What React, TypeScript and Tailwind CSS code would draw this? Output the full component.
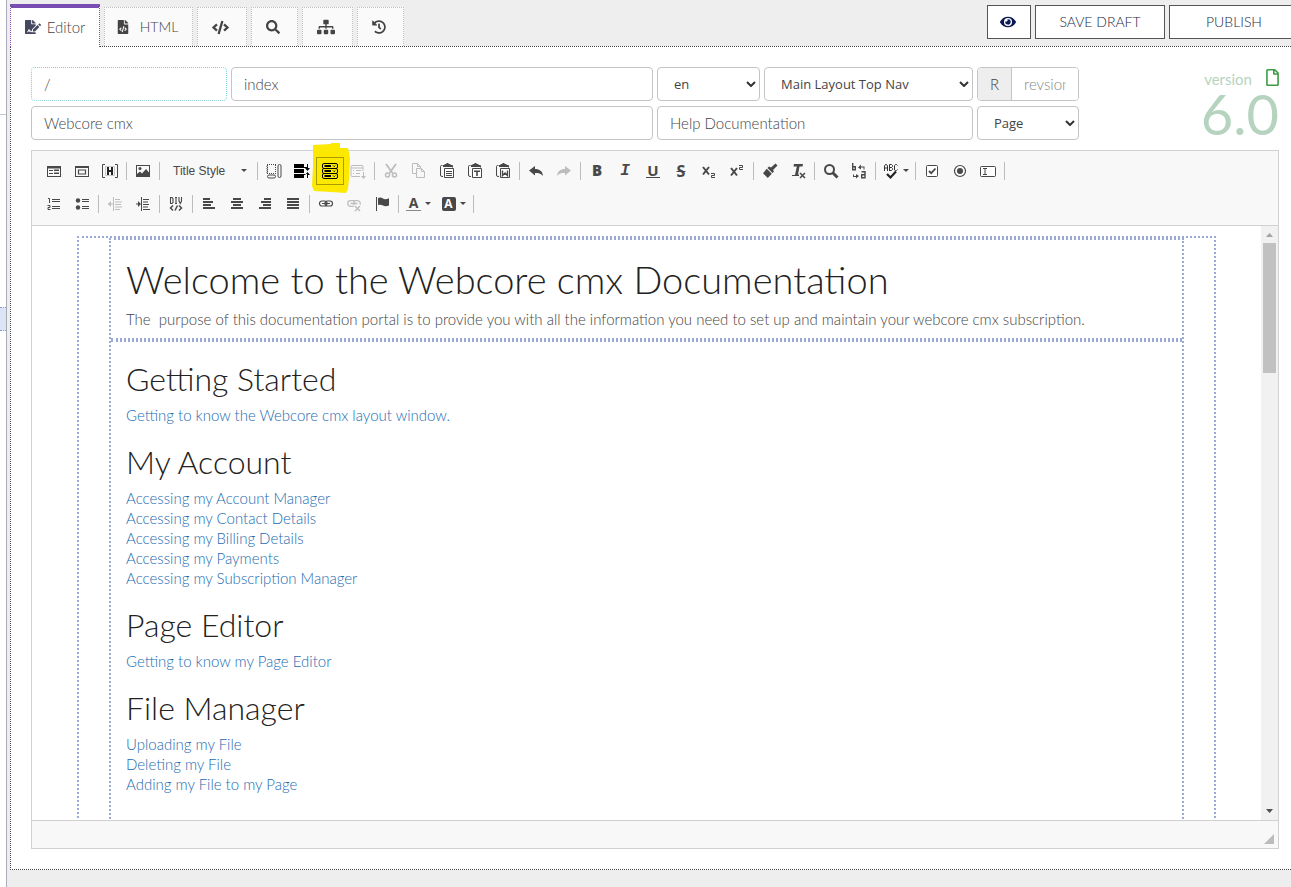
import React from "react";
import {
  FaCode,
  FaEye,
  FaFileCode,
  FaFileSignature,
  FaHistory,
  FaRegFile,
  FaSearch,
  FaSitemap,
} from "react-icons/fa";

const fieldBase =
  "h-[34px] w-full min-w-0 rounded border bg-white px-3 text-[15px] font-light text-[#444] outline-none placeholder:text-[#999]";
const field = `${fieldBase} border-[#c4c4c4]`;

const tabBase =
  "flex h-[39px] items-center justify-center border-x border-t border-dotted border-[#c0c0c0] bg-[#fafafa] pr-[3px] text-sm font-light text-[#444]";

function Separator() {
  return <span className="mx-[2px] h-[18px] w-px shrink-0 bg-[#bcbcbc]" />;
}

function Tool({
  label,
  children,
  dim,
  menu,
}: {
  label: string;
  children: React.ReactNode;
  dim?: boolean;
  menu?: boolean;
}) {
  return (
    <button
      type="button"
      aria-label={label}
      title={label}
      className={`flex h-7 shrink-0 items-center justify-center gap-1 leading-none ${menu ? "w-[35px]" : "w-7"} ${dim ? "text-[#bdbdbd]" : "text-[#484848]"}`}
    >
      {children}
      {menu && <Caret />}
    </button>
  );
}

function Caret() {
  return (
    <svg width="6" height="3" viewBox="0 0 6 3" fill="#484848" className="shrink-0">
      <path d="M0 0h6L3 3z" />
    </svg>
  );
}

function Ico({ children, w = 16 }: { children: React.ReactNode; w?: number }) {
  return (
    <svg
      width={w}
      height="16"
      viewBox={`0 0 ${w} 16`}
      fill="currentColor"
      stroke="none"
      className="shrink-0 overflow-visible"
    >
      {children}
    </svg>
  );
}

function Clipboard({ children }: { children: React.ReactNode }) {
  return (
    <Ico>
      <path d="M4 2h1.500V1h2V0h2v1h2v1H13v2H4z" />
      <path d="M3.500 2.500h-1a1 1 0 0 0-1 1V12a1.500 1.500 0 0 0 1.500 1.500h1M13 2.500h.5v2" fill="none" stroke="currentColor" />
      <path d="M5.500 5.500h9v9h-9z" fill="#fff" stroke="currentColor" />
      {children}
    </Ico>
  );
}

function Lines({ rows }: { rows: [number, number][] }) {
  return (
    <Ico>
      {rows.map(([x, width], i) => (
        <rect key={i} x={x} y={2 + i * 3} width={width} height="2" />
      ))}
    </Ico>
  );
}

function ServerStack() {
  return (
    <Ico>
      {[0, 5, 10].map((y) => (
        <g key={y}>
          <rect x=".5" y={y + 0.5} width="15" height="5" rx="1.500" fill="none" stroke="#000" />
          <path d={`M2.500 ${y + 3}h6.500`} stroke="#000" strokeWidth="2" />
          <path d={`M11 ${y + 2.500}l1.200 1.200 1.200-1.200`} stroke="#000" fill="none" strokeWidth=".9" />
        </g>
      ))}
    </Ico>
  );
}

function Toolbar() {
  return (
    <div role="toolbar" aria-label="Formatting" className="border-b border-[#d1d1d1] bg-[#f8f8f8] px-2 pt-[3px] pb-[5px]">
      <div className="flex h-[33px] items-center">
        <Tool label="Form">
          <Ico>
            <path d="M1 3h14v11H1zM2 5.500v7.500h12v-7.500z" fillRule="evenodd" />
            <path d="M3 7h4v1H3zM3 10h4v1H3zM8 6.500h5V8H8zM8 9.500h5V11H8z" />
          </Ico>
        </Tool>
        <Tool label="Frame">
          <Ico>
            <path d="M1 3h14v11H1zM2 5v8h12V5z" fillRule="evenodd" />
            <path d="M4.500 7h7v4h-7z" fill="none" stroke="currentColor" strokeWidth="1.200" />
          </Ico>
        </Tool>
        <Tool label="Hidden field">
          <Ico>
            <path d="M3 1.500H.5v13H3M13 1.500h2.500v13H13" fill="none" stroke="currentColor" />
            <path d="M3.500 3.500h9v9h-9z" fill="none" stroke="#c8c8c8" />
            <path d="M5 4h2v3h2V4h2v8H9V9H7v3H5z" fill="#222" />
          </Ico>
        </Tool>
        <Separator />
        <Tool label="Image">
          <Ico>
            <path d="M1 2h14v12H1zM2 3v10h12V3z" fillRule="evenodd" />
            <circle cx="5" cy="5.500" r="1.500" />
            <path d="M2 13V11l3-2.500 2 2L11 6l3 3.500V13z" />
          </Ico>
        </Tool>
        <Separator />
        <button
          type="button"
          className="flex h-7 w-[93px] shrink-0 items-center justify-between pr-2 pl-[11px] font-['Liberation_Sans',sans-serif] text-xs text-[#484848]"
        >
          Title Style
          <Caret />
        </button>
        <Separator />
        <Tool label="Layout">
          <Ico>
            <path d="M1 1.500h9M1 3v8M1.500 2v9M9.500 2v9M1 10.500h9" fill="none" stroke="currentColor" strokeDasharray="1 1" />
            <rect x="1.500" y="12" width="8" height="3" rx="1.500" fill="none" stroke="currentColor" />
            <rect x="12" y="1.500" width="3" height="13" rx="1.500" fill="none" stroke="currentColor" />
          </Ico>
        </Tool>
        <Tool label="Insert row">
          <Ico>
            <path d="M0 1h10v4H0zM0 6h10v4H0zM0 11h10v4H0z" fill="#000" />
            <path d="M9 4h4v1H9zM9 11h4v1H9zM13 1h1v4h2l-2.500 3L11 5h2zM13 15h1v-3h2l-2.500-3L11 12h2z" fill="#000" />
          </Ico>
        </Tool>
        <div className="relative shrink-0">
          <svg
            width="38"
            height="50"
            viewBox="0 0 38 50"
            className="absolute -top-[14px] -left-1"
            fill="#fde800"
            aria-hidden="true"
          >
            <path d="M1 2l18-1 0-1h9v5h8l2 10-1 21-1 10-2 4-15-1-17-1-2-5 1-20z" />
          </svg>
          <button
            type="button"
            aria-label="Accordion"
            aria-pressed="true"
            className="relative flex h-7 w-7 items-center justify-center border border-[#a99b00]"
          >
            <ServerStack />
          </button>
        </div>
        <Tool label="Add item" dim>
          <Ico>
            <path d="M10 13.500H2a1 1 0 0 1-1-1v-9a1 1 0 0 1 1-1h10a1 1 0 0 1 1 1V8M1 5h12M3 7.500h1M6 7.500h5M3 10.500h1M6 10.500h4" fill="none" stroke="currentColor" />
            <path d="M13 9h1v4h2l-2.500 3-2.500-3h2z" />
          </Ico>
        </Tool>
        <Separator />
        <Tool label="Cut" dim>
          <Ico>
            <path d="M3 1l6.500 9M13 1L6.500 10" stroke="currentColor" strokeWidth="1.800" />
            <circle cx="4.500" cy="12" r="2" fill="none" stroke="currentColor" strokeWidth="1.500" />
            <circle cx="11.500" cy="12" r="2" fill="none" stroke="currentColor" strokeWidth="1.500" />
          </Ico>
        </Tool>
        <Tool label="Copy" dim>
          <Ico>
            <path d="M5 10.500H1.500v-10h5l3 3V5M6.500.500v3h3" fill="none" stroke="currentColor" />
            <path d="M5.500 5.500h5l3 3v6h-8zM10.500 5.500v3h3" fill="#f8f8f8" stroke="currentColor" />
          </Ico>
        </Tool>
        <Tool label="Paste">
          <Clipboard>
            <path d="M7 8h6v1H7zM7 10h6v1H7zM7 12h6v1H7z" />
          </Clipboard>
        </Tool>
        <Tool label="Paste as plain text">
          <Clipboard>
            <path d="M7 7.500h6V9h-2.200v4H9.200V9H7z" />
          </Clipboard>
        </Tool>
        <Tool label="Paste from Word">
          <Clipboard>
            <path d="M7.500 7.500v5L10 10l2.500 2.500v-5" fill="none" stroke="currentColor" strokeWidth="1.400" />
          </Clipboard>
        </Tool>
        <Separator />
        <Tool label="Undo">
          <Ico>
            <path d="M1 7.500L7 3v3c4.500 0 7.500 2 8 7-2-2.500-4.500-3-8-3v2.500z" />
          </Ico>
        </Tool>
        <Tool label="Redo" dim>
          <Ico>
            <path d="M15 7.500L9 3v3c-4.500 0-7.500 2-8 7 2-2.500 4.500-3 8-3v2.500z" />
          </Ico>
        </Tool>
        <Separator />
        <Tool label="Bold">
          <span className="font-['Open_Sans',sans-serif] text-[15px] font-extrabold">B</span>
        </Tool>
        <Tool label="Italic">
          <span className="font-['Liberation_Mono',monospace] text-base font-bold italic">I</span>
        </Tool>
        <Tool label="Underline">
          <span className="border-b border-current px-px font-['Open_Sans',sans-serif] text-[15px] leading-[13px] font-bold">
            U
          </span>
        </Tool>
        <Tool label="Strikethrough">
          <span className="font-['Open_Sans',sans-serif] text-base font-bold line-through">S</span>
        </Tool>
        <Tool label="Subscript">
          <Ico>
            <path d="M2 4l6 7.500M8 4l-6 7.500" stroke="currentColor" strokeWidth="2" />
            <path d="M10 10.500h3.500v2h-3v2H14" fill="none" stroke="currentColor" />
          </Ico>
        </Tool>
        <Tool label="Superscript">
          <Ico>
            <path d="M2 5l6 7.500M8 5l-6 7.500" stroke="currentColor" strokeWidth="2" />
            <path d="M10 2.500h3.500v2h-3v2H14" fill="none" stroke="currentColor" />
          </Ico>
        </Tool>
        <Separator />
        <Tool label="Copy formatting">
          <Ico>
            <path d="M13.500.5l2 2-4.500 4.500 1 1.500-1.500 1.500-5-5L7 3.500l2 1zM4.800 5.700l5 5-4 4.300L1 10.200z" />
          </Ico>
        </Tool>
        <Tool label="Remove format">
          <Ico>
            <path d="M4 1h9l-.5 2.500h-3L8 11.500h1V13H2v-1h3l1.800-8.500H3.500z" />
            <path d="M10 10l5 5M15 10l-5 5" stroke="currentColor" strokeWidth="1.500" />
          </Ico>
        </Tool>
        <Separator />
        <Tool label="Find">
          <Ico>
            <circle cx="6.500" cy="6.500" r="4.500" fill="none" stroke="currentColor" strokeWidth="2" />
            <path d="M9.500 9.500l5 5" stroke="currentColor" strokeWidth="3" />
          </Ico>
        </Tool>
        <Tool label="Replace">
          <Ico>
            <path d="M1.700 0v7M1 3.700h3.300v3H1" fill="none" stroke="currentColor" strokeWidth="1.400" />
            <path d="M7 4.500l3-3v2h3.500v3h-1v-2H10v2zM8 13l-3 2.500V14H2v-2.500h1V13h2v-2z" />
            <path d="M10.500 8.700h3.500v6h-3.300v-3h3" fill="none" stroke="currentColor" strokeWidth="1.400" />
          </Ico>
        </Tool>
        <Separator />
        <Tool label="Spell check" menu>
          <Ico>
            <path d="M1.500 8V3l1-1.500h1l1 1.500v5M1.500 5h3M6.500 8V1.500h2l1 1v1l-1 1h-2 2l1 1v1l-1 1h-2M14.500 2.500l-1-1h-1l-1 1V7l1 .5h1l1-1" fill="none" stroke="#333" />
            <path d="M4 11l3.500 3.500L13 8.500" fill="none" stroke="#222" strokeWidth="2.200" />
          </Ico>
        </Tool>
        <Separator />
        <Tool label="Checkbox">
          <Ico>
            <rect x="2.500" y="2.500" width="11" height="11" rx="1" fill="#fff" stroke="currentColor" />
            <path d="M5 8l2.200 2.200L11.500 5.500" fill="none" stroke="currentColor" strokeWidth="1.800" />
          </Ico>
        </Tool>
        <Tool label="Radio button">
          <Ico>
            <circle cx="8" cy="8" r="5.500" fill="none" stroke="currentColor" strokeWidth="1.200" />
            <circle cx="8" cy="8" r="3" />
          </Ico>
        </Tool>
        <Tool label="Text field">
          <Ico>
            <rect x=".5" y="3.500" width="15" height="10" rx="1" fill="#fff" stroke="currentColor" />
            <path d="M3 5.500h4M5 5.500v6M3 11.500h4" stroke="currentColor" />
          </Ico>
        </Tool>
        <Separator />
      </div>

      <div className="flex h-[33px] items-center">
        <Tool label="Numbered list">
          <Ico>
            <path d="M2 2.500h1.500V7M1.500 9.500h2.500v2H2v2h2.500M6 3.500h8M6 5.500h8M6 10.500h8M6 12.500h8" fill="none" stroke="currentColor" />
          </Ico>
        </Tool>
        <Tool label="Bulleted list">
          <Ico>
            <circle cx="4" cy="4.500" r="2.200" />
            <circle cx="4" cy="11.500" r="2.200" />
            <path d="M8 3.500h7M8 5.500h7M8 10.500h7M8 12.500h7" stroke="currentColor" />
          </Ico>
        </Tool>
        <Separator />
        <Tool label="Decrease indent" dim>
          <Ico>
            <path d="M6.500 1v14M8 3.500h5M8 6h7M8 8.500h6M8 11h7M8 13.500h5M1 8h5" stroke="currentColor" />
            <path d="M4 5v6L1 8z" />
          </Ico>
        </Tool>
        <Tool label="Increase indent">
          <Ico>
            <path d="M6.500 1v14M8 3.500h6M8 6h5M8 8.500h6M8 11h5M8 13.500h7M1 8h4" stroke="currentColor" />
            <path d="M3 5v6l3-3z" />
          </Ico>
        </Tool>
        <Separator />
        <Tool label="Create div container">
          <Ico>
            <path d="M2.500 1v6M2 1.500h2l1 1v4l-1 1H2M7 1.500h2M8 1.500v6M7 7.500h2M11 1v4l1.300 2.500L13.500 5V1" fill="none" stroke="currentColor" strokeWidth="1.100" />
            <path d="M5 9.500L2.500 12 5 14.500M11 9.500l2.500 2.500-2.500 2.500M9.500 9.500l-2.500 5" fill="none" stroke="currentColor" strokeWidth="1.500" />
          </Ico>
        </Tool>
        <Separator />
        <Tool label="Align left">
          <Lines rows={[[2, 7], [2, 10], [2, 8], [2, 12]]} />
        </Tool>
        <Tool label="Center">
          <Lines rows={[[4, 8], [2, 12], [4, 8], [2, 12]]} />
        </Tool>
        <Tool label="Align right">
          <Lines rows={[[7, 7], [4, 10], [6, 8], [2, 12]]} />
        </Tool>
        <Tool label="Justify">
          <Lines rows={[[2, 12], [2, 12], [2, 12], [2, 12]]} />
        </Tool>
        <Separator />
        <Tool label="Link">
          <Ico>
            <rect x="1.500" y="5" width="7.500" height="5" rx="2.500" fill="none" stroke="currentColor" strokeWidth="1.200" />
            <rect x="7" y="5" width="7.500" height="5" rx="2.500" fill="none" stroke="currentColor" strokeWidth="1.200" />
            <path d="M4 7.500h8" stroke="currentColor" />
          </Ico>
        </Tool>
        <Tool label="Unlink" dim>
          <Ico>
            <path d="M8 10.300H4.500a2.800 2.800 0 0 1 0-5.600h7a2.800 2.800 0 0 1 2.500 4M4.500 7.500h7M8 5v4" fill="none" stroke="currentColor" strokeWidth="1.300" />
            <path d="M9 10l5 5M14 10l-5 5" stroke="currentColor" strokeWidth="1.500" />
          </Ico>
        </Tool>
        <Tool label="Anchor">
          <Ico>
            <path d="M2 1h1v14H2zM4 2c2-1 3.500-.5 5 .500s3.500.8 6-.300V9.500c-2.500 1-4.500.8-6 0s-3-1.200-5-.500z" />
          </Ico>
        </Tool>
        <Separator />
        <Tool label="Text colour" menu>
          <span className="flex flex-col items-center">
            <span className="font-['Open_Sans',sans-serif] text-sm leading-3 font-bold">A</span>
            <span className="mt-px h-px w-[15px] bg-[#888]" />
          </span>
        </Tool>
        <Tool label="Background colour" menu>
          <span className="flex h-[14px] w-[14px] items-center justify-center rounded-[2px] bg-[#484848] font-['Open_Sans',sans-serif] text-xs font-bold text-white">
            A
          </span>
        </Tool>
        <Separator />
      </div>
    </div>
  );
}

const sections = [
  { title: "Getting Started", links: ["Getting to know the Webcore cmx layout window."] },
  {
    title: "My Account",
    links: [
      "Accessing my Account Manager",
      "Accessing my Contact Details",
      "Accessing my Billing Details",
      "Accessing my Payments",
      "Accessing my Subscription Manager",
    ],
  },
  { title: "Page Editor", links: ["Getting to know my Page Editor"] },
  { title: "File Manager", links: ["Uploading my File", "Deleting my File", "Adding my File to my Page"] },
];

function Document() {
  return (
    <div className="flex min-h-0 flex-1 bg-white">
      <div className="min-w-0 flex-1 overflow-hidden px-[45px] pt-[10px]">
        <div className="min-h-full border-x-2 border-t-2 border-dotted border-[#9aa9d6] px-[30px]">
          <div className="border-x-2 border-t-2 border-dotted border-[#9aa9d6]">
            <div className="border-b-2 border-dotted border-[#9aa9d6] px-[15px] pt-[19px] pb-[9px]">
              <h1 className="mb-[10px] text-[38px] leading-10 font-light text-[#222]">
                Welcome to the Webcore cmx Documentation
              </h1>
              <p className="text-[15px] leading-5 font-light whitespace-pre-wrap text-[#444]">
                {"The  purpose of this documentation portal is to provide you with all the information you need to set up and maintain your webcore cmx subscription."}
              </p>
            </div>
            <div className="flex flex-col gap-5 border-t-2 border-dotted border-[#9aa9d6] px-[15px] pt-5 pb-16">
              {sections.map((s) => (
                <section key={s.title}>
                  <h2 className="mb-[10px] text-[32px] leading-[33px] font-light text-[#222]">{s.title}</h2>
                  <ul>
                    {s.links.map((l) => (
                      <li key={l} className="text-[15px] leading-5 font-light text-[#1c6bb0]">
                        <a href="#">{l}</a>
                      </li>
                    ))}
                  </ul>
                </section>
              ))}
            </div>
          </div>
        </div>
      </div>
      <div className="flex w-[17px] shrink-0 flex-col items-center bg-[#f1f1f1]" aria-hidden="true">
        <svg width="17" height="17" viewBox="0 0 17 17" fill="#a3a3a3">
          <path d="M5 11h7L8.500 7z" />
        </svg>
        <div className="h-[130px] w-[13px] bg-[#c1c1c1]" />
        <div className="flex-1" />
        <svg width="17" height="17" viewBox="0 0 17 17" fill="#505050">
          <path d="M5 6h7l-3.500 4z" />
        </svg>
      </div>
    </div>
  );
}

function Select({ label, value }: { label: string; value: string }) {
  return (
    <div className="relative min-w-0">
      <select
        aria-label={label}
        defaultValue={value}
        className="h-[34px] w-full appearance-none rounded border border-[#c4c4c4] bg-white pt-px pr-5 pl-4 font-['Open_Sans',sans-serif] text-[13px] text-[#444] outline-none"
      >
        <option>{value}</option>
      </select>
      <svg
        width="10"
        height="6"
        viewBox="0 0 10 6"
        className="pointer-events-none absolute top-[14px] right-1"
        fill="none"
        stroke="#333"
        strokeWidth="2"
      >
        <path d="M1 1l4 4 4-4" />
      </svg>
    </div>
  );
}

export default function App() {
  return (
    <div className="flex h-screen min-h-[600px] overflow-hidden bg-[#eee] font-[Lato,sans-serif]">
      <aside className="flex w-[7px] shrink-0 flex-col border-r border-[#a9adb5] bg-white" aria-hidden="true">
        <div className="h-[115px] border-b border-[#c5c8dc]" />
        <div className="h-48" />
        <div className="h-6 border-y border-dotted border-[#8f9fd0] bg-[#dbe5f5]" />
      </aside>

      <div className="ml-[3px] flex min-w-0 flex-1 flex-col">
        <header className="flex h-[46px] shrink-0 justify-between">
          <nav className="flex items-end gap-1">
            <button
              type="button"
              className="relative -mb-px flex h-[43px] w-[90px] items-center justify-center gap-[6px] border-x border-t-4 border-[#7a4db3] bg-white pb-px text-[15px] font-light text-[#444] [border-left-style:dotted] [border-right-style:dotted]"
            >
              <FaFileSignature className="text-base text-[#45485f]" />
              Editor
            </button>
            <button type="button" className={`${tabBase} w-[89px] gap-[10px]`}>
              <FaFileCode className="text-sm text-[#444]" />
              HTML
            </button>
            <button type="button" aria-label="Source" className={`${tabBase} w-[50px]`}>
              <FaCode className="text-[17px] text-[#444]" />
            </button>
            <button type="button" aria-label="Search" className={`${tabBase} w-[47px]`}>
              <FaSearch className="text-sm text-[#444]" />
            </button>
            <button type="button" aria-label="Site map" className={`${tabBase} w-[51px]`}>
              <FaSitemap className="text-lg text-[#444]" />
            </button>
            <button type="button" aria-label="History" className={`${tabBase} w-[47px]`}>
              <FaHistory className="text-sm text-[#444]" />
            </button>
          </nav>
          <div className="-mr-2 flex gap-1 pt-[5px] text-sm font-light text-[#23283f]">
            <button
              type="button"
              aria-label="Preview"
              className="flex h-[34px] w-11 items-center justify-center border border-[#555] bg-white pr-[3px]"
            >
              <FaEye className="text-base text-[#0a1a55]" />
            </button>
            <button type="button" className="h-[34px] w-[130px] border border-[#555] bg-white">
              SAVE DRAFT
            </button>
            <button type="button" className="h-[34px] w-[130px] border border-[#555] bg-white">
              PUBLISH
            </button>
          </div>
        </header>

        <main className="mb-[17px] flex min-h-0 flex-1 flex-col border-y border-l border-dotted border-[#444] bg-white pt-5 pr-3 pb-5 pl-5">
          <div className="mb-[10px] flex justify-between">
            <form className="grid flex-1 grid-cols-[196fr_422fr_103fr_209fr_102fr] gap-x-1 gap-y-[5px]">
              <input aria-label="Path" defaultValue="/" className={`${fieldBase} border-dotted border-[#7fcfd8]`} />
              <input aria-label="File name" defaultValue="index" className={field} />
              <Select label="Language" value="en" />
              <Select label="Layout" value="Main Layout Top Nav" />
              <div className="flex h-[34px] min-w-0 overflow-hidden rounded border border-[#c4c4c4]">
                <label
                  htmlFor="revision"
                  className="flex w-[34px] shrink-0 items-center justify-center border-r border-[#c4c4c4] bg-[#eee] text-[15px] font-light text-[#444]"
                >
                  R
                </label>
                <input
                  id="revision"
                  placeholder="revsion"
                  className="w-full min-w-0 bg-white px-3 text-[15px] font-light outline-none placeholder:text-[#888]"
                />
              </div>
              <input aria-label="Title" defaultValue="Webcore cmx" className={`${field} col-span-2`} />
              <input aria-label="Description" defaultValue="Help Documentation" className={`${field} col-span-2`} />
              <Select label="Type" value="Page" />
            </form>
            <div className="-mr-[2px] flex h-[72px] w-[202px] flex-col items-end text-[#b5d3bf]">
              <div className="flex items-center gap-3 text-[15px] leading-6">
                <span>version</span>
                <FaRegFile className="mb-1 text-[17px] text-[#3f9a45]" />
              </div>
              <div className="pr-[2px] text-[56px] leading-[46px]">6.0</div>
            </div>
          </div>

          <div className="flex min-h-0 flex-1 flex-col border border-[#d1d1d1]">
            <Toolbar />
            <Document />
            <footer className="flex h-7 shrink-0 items-end justify-end border-t border-[#d1d1d1] bg-[#f8f8f8] p-1">
              <svg width="10" height="10" viewBox="0 0 10 10" fill="#bcbcbc" aria-hidden="true">
                <path d="M10 0v10H0z" />
              </svg>
            </footer>
          </div>
        </main>
      </div>
    </div>
  );
}
